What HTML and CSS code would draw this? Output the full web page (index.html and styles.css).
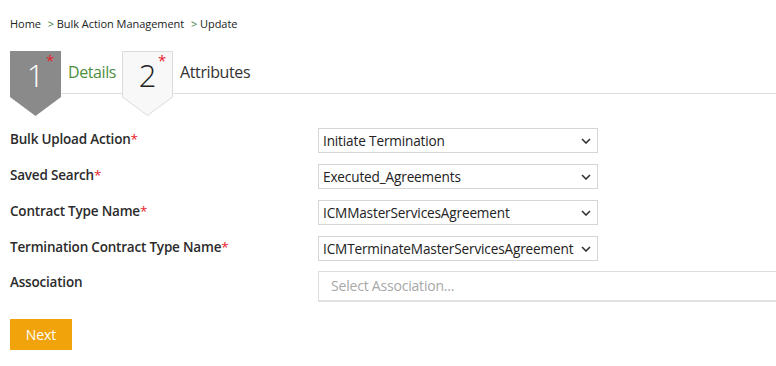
FILE: index.html
```html
<!DOCTYPE html>
<html lang="en">
<head>
  <meta charset="UTF-8">
  <title>Bulk Action Management - Update</title>
  <link rel="stylesheet" href="styles.css">
</head>
<body>
  <div class="breadcrumb">
    <span>Home</span>
    <span class="sep">&gt;</span> <span>Bulk Action Management</span>
    <span class="sep">&gt;</span> <span>Update</span>
  </div>

  <div class="steps">
    <div class="step active">
      <svg class="tag" width="52" height="66" viewBox="0 0 52 66">
        <polygon points="0,0 51,0 51,46 25.5,65 0,46" fill="#8a8a8a"/>
      </svg>
      <span class="num">1</span>
      <span class="star">*</span>
    </div>
    <div class="stepLabel done">Details</div>
    <div class="step">
      <svg class="tag" width="52" height="66" viewBox="0 0 52 66">
        <polygon points="0.5,0.5 50.5,0.5 50.5,46 25.5,64.5 0.5,46" fill="#f8f8f8" stroke="#dcdcdc"/>
      </svg>
      <span class="num">2</span>
      <span class="star">*</span>
    </div>
    <div class="stepLabel">Attributes</div>
  </div>

  <div class="form">
    <div class="row">
      <label>Bulk Upload Action<span class="req">*</span></label>
      <div class="select">
        <span class="val">Initiate Termination</span>
        <svg class="chev" width="10" height="6" viewBox="0 0 10 6"><path d="M1 1 L5 5 L9 1" fill="none" stroke="#333" stroke-width="1.6"/></svg>
      </div>
    </div>
    <div class="row">
      <label>Saved Search<span class="req">*</span></label>
      <div class="select">
        <span class="val">Executed_Agreements</span>
        <svg class="chev" width="10" height="6" viewBox="0 0 10 6"><path d="M1 1 L5 5 L9 1" fill="none" stroke="#333" stroke-width="1.6"/></svg>
      </div>
    </div>
    <div class="row">
      <label>Contract Type Name<span class="req">*</span></label>
      <div class="select">
        <span class="val">ICMMasterServicesAgreement</span>
        <svg class="chev" width="10" height="6" viewBox="0 0 10 6"><path d="M1 1 L5 5 L9 1" fill="none" stroke="#333" stroke-width="1.6"/></svg>
      </div>
    </div>
    <div class="row">
      <label>Termination Contract Type Name<span class="req">*</span></label>
      <div class="select">
        <span class="val">ICMTerminateMasterServicesAgreement</span>
        <svg class="chev" width="10" height="6" viewBox="0 0 10 6"><path d="M1 1 L5 5 L9 1" fill="none" stroke="#333" stroke-width="1.6"/></svg>
      </div>
    </div>
    <div class="row assoc">
      <label>Association</label>
      <div class="input">Select Association...</div>
    </div>
  </div>

  <button class="next">Next</button>
</body>
</html>
```

FILE: styles.css
```css
body {
  margin: 0;
  padding: 0 0 0 10px;
  background: #fff;
  color: #222;
  font-family: "Open Sans", "Noto Sans", sans-serif;
  overflow: hidden;
}

.breadcrumb {
  font-size: 11px;
  color: #222;
  padding-top: 15px;
  height: 20px;
  line-height: 18px;
  letter-spacing: -0.05px;
}

.breadcrumb .sep {
  color: #3d7a3d;
  margin-left: 4px;
}

.steps {
  display: flex;
  align-items: flex-start;
  margin-top: 16px;
  height: 42px;
  border-bottom: 1px solid #dedede;
  margin-left: 51px;
}

.step {
  position: relative;
  width: 52px;
  height: 66px;
  flex: none;
}

.steps .step:first-child {
  margin-left: -51px;
}

.step .tag {
  position: absolute;
  top: 0;
  left: 0;
}

.step .num {
  position: absolute;
  left: 0;
  width: 51px;
  top: 4px;
  text-align: center;
  font-size: 31px;
  font-weight: 300;
  line-height: 40px;
  color: #222;
}

.step.active .num {
  color: #fff;
}

.step .star {
  position: absolute;
  left: 36px;
  top: 1px;
  color: #e8202a;
  font-size: 15px;
  line-height: 16px;
}

.stepLabel {
  font-size: 16px;
  line-height: 20px;
  padding: 11px 6px 0 6px;
  color: #333;
  letter-spacing: -0.4px;
}

.stepLabel.done {
  color: #4d8f3e;
}

.form {
  margin-top: 34px;
}

.row {
  display: flex;
  align-items: flex-start;
  height: 25px;
  margin-bottom: 11px;
}

.row label {
  width: 308px;
  flex: none;
  font-size: 13.5px;
  font-weight: 600;
  line-height: 23px;
  color: #2b2b2b;
  letter-spacing: -0.2px;
}

.req {
  color: #e8202a;
  font-weight: 400;
}

.select {
  box-sizing: border-box;
  width: 280px;
  height: 25px;
  border: 1px solid #d6d6d6;
  display: flex;
  align-items: center;
  justify-content: space-between;
  padding: 0 6px 0 4px;
  font-size: 13.6px;
  color: #222;
  letter-spacing: -0.15px;
}

.chev {
  flex: none;
}

.row.assoc {
  height: 31px;
  margin-top: -1px;
  margin-bottom: 0;
}

.input {
  box-sizing: border-box;
  flex: 1;
  height: 31px;
  margin-right: -20px;
  border: 1px solid #dedede;
  border-bottom: 2px solid #e2e2e2;
  padding: 0 12px;
  line-height: 28px;
  font-size: 14px;
  color: #a8a8a8;
  letter-spacing: -0.2px;
}

.next {
  display: block;
  margin-top: 17px;
  width: 62px;
  height: 31px;
  background: #f0a30a;
  color: #fff;
  border: none;
  font-family: "Open Sans", "Noto Sans", sans-serif;
  font-size: 14px;
  padding: 0;
  border-radius: 0;
}
```
